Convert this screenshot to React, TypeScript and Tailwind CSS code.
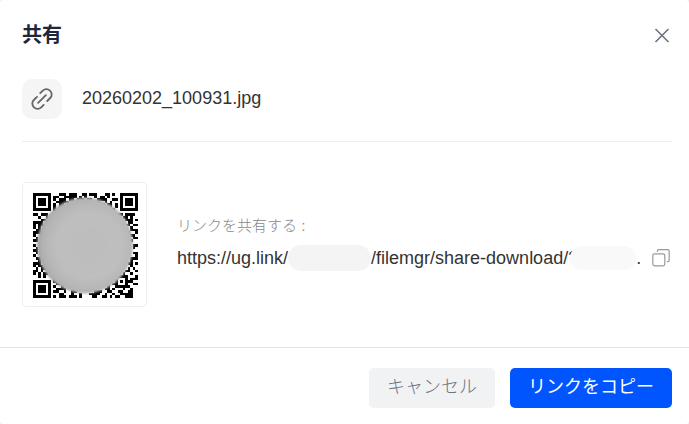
import { useState } from 'react';

const FILE_NAME = '20260202_100931.jpg';
const QR_SIZE = 41;

// [row, column, length] runs of dark modules, finder patterns excluded
const QR_RUNS: [number, number, number][] = [
  [0, 10, 3], [0, 14, 3], [0, 19, 2], [0, 22, 3], [0, 28, 2], [0, 31, 1],
  [1, 8, 2], [1, 12, 5], [1, 18, 1], [1, 20, 1], [1, 24, 1], [1, 26, 2], [1, 29, 1],
  [2, 8, 1], [2, 10, 3], [2, 14, 2], [2, 17, 3], [2, 21, 2], [2, 25, 3], [2, 28, 1], [2, 31, 2],
  [3, 9, 4], [3, 13, 1], [3, 24, 2], [3, 28, 1], [3, 30, 1],
  [4, 8, 1], [4, 10, 2], [4, 27, 1], [4, 29, 2], [4, 32, 1],
  [5, 8, 1], [5, 10, 1], [5, 30, 1], [5, 32, 1],
  [6, 8, 1], [6, 31, 1],
  [8, 0, 2], [8, 3, 3], [8, 33, 2], [8, 36, 4],
  [9, 2, 1], [9, 5, 1], [9, 35, 2], [9, 38, 1],
  [10, 3, 2], [10, 36, 3], [10, 40, 1],
  [11, 0, 4], [11, 37, 2],
  [12, 0, 1], [12, 2, 2], [12, 36, 2], [12, 39, 2],
  [13, 0, 1], [13, 2, 1], [13, 38, 1],
  [14, 1, 2], [14, 38, 3],
  [15, 0, 3], [15, 37, 1], [15, 40, 1],
  [16, 0, 1], [16, 38, 2],
  [17, 1, 1], [17, 39, 2],
  [18, 0, 2], [18, 38, 1],
  [20, 0, 1], [20, 39, 2],
  [21, 1, 1], [21, 39, 1],
  [22, 0, 2], [23, 1, 1], [23, 39, 2],
  [24, 0, 1], [24, 40, 1],
  [25, 1, 2], [25, 38, 3],
  [26, 2, 1], [26, 38, 1],
  [27, 0, 3], [27, 37, 2], [27, 40, 1],
  [28, 0, 1], [28, 2, 2], [28, 38, 1],
  [29, 1, 1], [29, 3, 2], [29, 37, 1], [29, 39, 1],
  [30, 0, 2], [30, 3, 1], [30, 36, 2], [30, 40, 1],
  [31, 0, 1], [31, 2, 1], [31, 4, 2], [31, 35, 1], [31, 38, 1],
  [32, 2, 1], [32, 4, 1], [32, 32, 5], [32, 40, 1],
  [33, 8, 1], [33, 32, 1], [33, 36, 1], [33, 38, 3],
  [34, 8, 2], [34, 30, 1], [34, 32, 1], [34, 34, 1], [34, 36, 3],
  [35, 9, 2], [35, 31, 2], [35, 36, 1], [35, 39, 2],
  [36, 8, 1], [36, 11, 1], [36, 29, 1], [36, 32, 6],
  [37, 9, 4], [37, 28, 2], [37, 31, 1], [37, 35, 1], [37, 38, 1],
  [38, 8, 2], [38, 12, 1], [38, 15, 2], [38, 24, 3], [38, 29, 2], [38, 33, 2], [38, 37, 2],
  [39, 10, 2], [39, 15, 1], [39, 18, 1], [39, 22, 4], [39, 28, 1], [39, 31, 1], [39, 34, 5],
  [40, 8, 1], [40, 10, 3], [40, 14, 3], [40, 18, 1], [40, 23, 2], [40, 27, 2], [40, 30, 1], [40, 32, 2], [40, 36, 3],
];

const FINDERS = [
  [0, 0],
  [QR_SIZE - 7, 0],
  [0, QR_SIZE - 7],
];

function QrCode() {
  return (
    <svg viewBox="0 0 105 105" className="h-[105px] w-[105px]" role="img" aria-label="QR">
      <defs>
        <radialGradient id="cover" cx="0.55" cy="0.5" r="0.55">
          <stop offset="0" stopColor="#bcbcbc" />
          <stop offset="0.6" stopColor="#bfbfbf" />
          <stop offset="0.9" stopColor="#b3b3b3" />
          <stop offset="1" stopColor="#a0a0a0" />
        </radialGradient>
        <filter id="soft" x="-5%" y="-5%" width="110%" height="110%">
          <feGaussianBlur stdDeviation="0.8" />
        </filter>
      </defs>
      <g transform={`scale(${105 / QR_SIZE})`} shapeRendering="crispEdges">
        {QR_RUNS.map(([y, x, w]) => (
          <rect key={`${y}-${x}`} x={x} y={y} width={w} height={1} />
        ))}
        {FINDERS.map(([x, y]) => (
          <g key={`${x}-${y}`}>
            <path fillRule="evenodd" d={`M${x} ${y}h7v7h-7zM${x + 1} ${y + 1}v5h5v-5z`} />
            <rect x={x + 2} y={y + 2} width={3} height={3} />
          </g>
        ))}
      </g>
      <circle cx="52" cy="52.5" r="48" fill="url(#cover)" filter="url(#soft)" />
    </svg>
  );
}

function LinkIcon() {
  return (
    <svg viewBox="0 0 24 24" className="h-6 w-6" fill="none" stroke="#666666" strokeWidth="1.8" strokeLinecap="round">
      <path d="M8.1 15.9l7.8-7.8" />
      <path d="M10.2 6.2l2.6-2.6a5 5 0 0 1 7.1 0l.3.3a5 5 0 0 1 0 7.1l-3 3" />
      <path d="M7 9.8l-3.2 3.2a5 5 0 0 0 0 7.1l.3.3a5 5 0 0 0 7.1 0l2.5-2.5" />
    </svg>
  );
}

function CopyIcon() {
  return (
    <svg viewBox="0 0 18 18" className="h-[18px] w-[18px]" fill="none" stroke="#999999" strokeWidth="1.2" strokeLinecap="round">
      <rect x="0.8" y="4.8" width="12" height="12" rx="1.8" />
      <path d="M5.3 2.5v-.2a1.600 1.600 0 0 1 1.600-1.600h8.700a1.600 1.600 0 0 1 1.600 1.600v8.700a1.600 1.600 0 0 1-1.600 1.600h-.2" />
    </svg>
  );
}

export default function App() {
  const [open, setOpen] = useState(true);
  const close = () => setOpen(false);

  return (
    <div className="bg-[#f0f0f0] font-['Liberation_Sans','Noto_Sans_CJK_JP',sans-serif]">
      {open && (
        <section role="dialog" aria-labelledby="share-title" className="overflow-hidden rounded bg-white">
          <header className="flex h-[69px] items-center justify-between pr-[17px] pl-[22px]">
            <h1 id="share-title" className="text-xl font-bold text-[#1f2639]">共有</h1>
            <button type="button" aria-label="閉じる" onClick={close}>
              <svg viewBox="0 0 20 20" className="h-5 w-5" fill="none" stroke="#6b7280" strokeWidth="1.6">
                <path d="M3.5 4l13 13M16.5 4l-13 13" />
              </svg>
            </button>
          </header>

          <div className="mr-[17px] ml-[22px] flex items-center gap-5 border-b border-[#eeeeee] pt-[10px] pb-[22px]">
            <span className="flex h-10 w-10 items-center justify-center rounded-[10px] bg-[#f5f5f5]">
              <LinkIcon />
            </span>
            <span className="pb-0.5 text-lg leading-6 text-[#333333]">{FILE_NAME}</span>
          </div>

          <div className="flex items-center gap-[30px] py-10 pr-[17px] pl-[22px]">
            <div className="shrink-0 rounded border border-[#eeeeee] pt-[10px] pr-2 pb-2 pl-[10px]">
              <QrCode />
            </div>
            <div className="min-w-0 flex-1 pb-0.5">
              <p className="text-[15px] leading-6 font-light text-[#888888]">リンクを共有する :</p>
              <div className="mt-1 flex h-8 items-center justify-between text-lg text-[#333333]">
                <div className="flex min-w-0 items-center whitespace-nowrap">
                  <span>https://ug.link/</span>
                  <span className="h-[26px] w-[83px] rounded-full bg-[#f4f4f4]" />
                  <span>/filemgr/share-download/?</span>
                  <span className="-ml-2 h-6 w-[66px] rounded-full bg-[#f9f9f9]" />
                  <span>.</span>
                </div>
                <button type="button" aria-label="コピー" className="pr-0.5">
                  <CopyIcon />
                </button>
              </div>
            </div>
          </div>

          <footer className="flex justify-end gap-[15px] border-t border-[#e5e5e5] pt-5 pr-[17px] pb-4 text-lg leading-6">
            <button type="button" onClick={close} className="h-10 rounded-[5px] bg-[#f1f2f4] px-[18px] pb-0.5 font-light text-[#6b7280]">
              キャンセル
            </button>
            <button type="button" className="h-10 rounded-[5px] bg-[#0055ff] px-[18px] pb-0.5 text-white">
              リンクをコピー
            </button>
          </footer>
        </section>
      )}
    </div>
  );
}
